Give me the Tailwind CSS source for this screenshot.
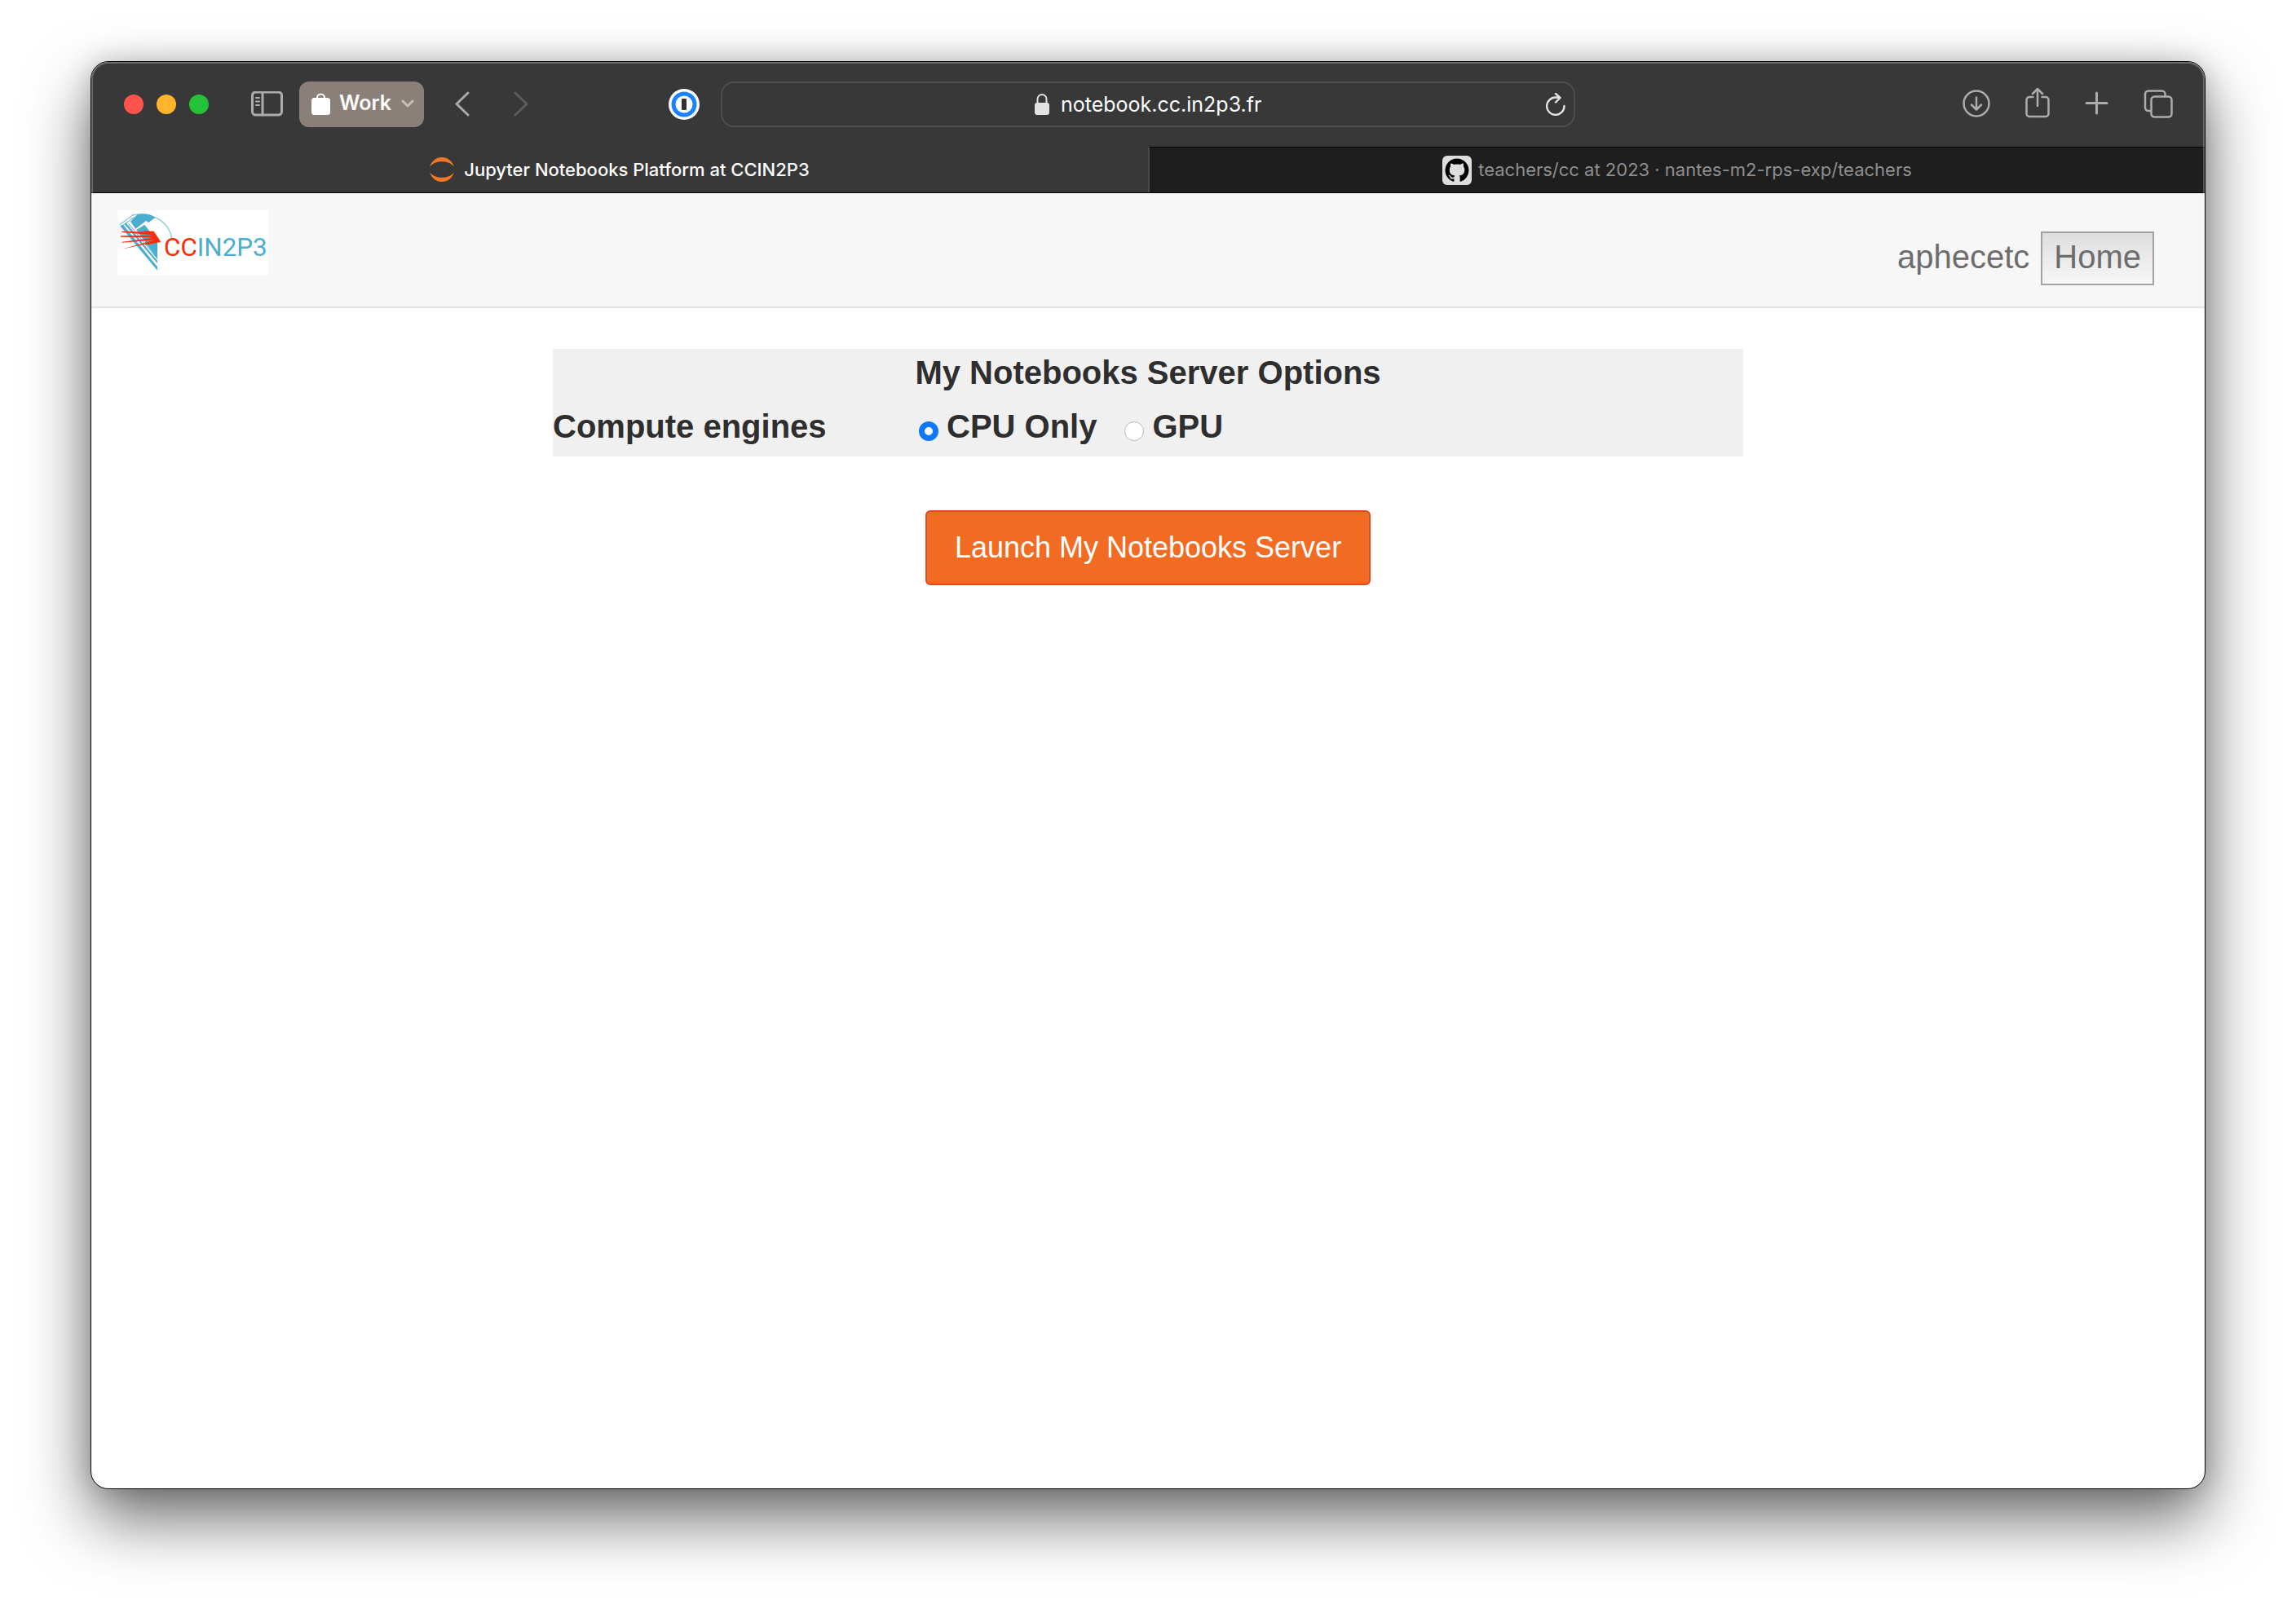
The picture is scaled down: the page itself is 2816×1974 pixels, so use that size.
<!DOCTYPE html>
<html lang="en">
<head>
<meta charset="utf-8">
<title>Jupyter Notebooks Platform at CCIN2P3</title>
<script src="https://cdn.jsdelivr.net/npm/@tailwindcss/browser@4"></script>
</head>
<body class="flex min-h-screen bg-white px-[111px] pt-[75px] pb-[147px] font-['Liberation_Sans',Arial,sans-serif]">
<div class="relative flex flex-1 flex-col overflow-hidden rounded-[22px] border border-black bg-white shadow-[0_36px_80px_rgba(0,0,0,0.58),0_0_32px_rgba(0,0,0,0.18)]">

  <!-- Browser toolbar -->
  <div class="grid h-[104px] grid-cols-[1fr_minmax(0,1048px)_1fr] items-center bg-[#383838] font-[Inter,sans-serif] text-[#acacac]">
    <div class="flex items-center pl-10">
      <div class="flex gap-4">
        <button aria-label="Close" class="size-6 rounded-full bg-[#ff544d]"></button>
        <button aria-label="Minimize" class="size-6 rounded-full bg-[#ffb429]"></button>
        <button aria-label="Zoom" class="size-6 rounded-full bg-[#25c138]"></button>
      </div>
      <button aria-label="Show sidebar" class="ml-[52px]">
        <svg class="block h-8 w-10" viewBox="0 0 40 32" fill="none" stroke="currentColor" stroke-width="3" stroke-linecap="round"><rect x="1.5" y="1" width="36" height="28" rx="4"/><path d="M14 1v28"/><path d="M6 8h4M6 12.500h4M6 17h4" stroke-width="2"/></svg>
      </button>
      <button class="ml-[19px] flex h-14 items-center rounded-xl bg-[#8a8079] pr-3 pb-0.5 pl-[15px] text-[25px] font-semibold text-white">
        <svg class="mr-2.5 h-7 w-6" viewBox="0 0 24 28"><rect x="0" y="7" width="23" height="21" rx="3.500" fill="#fff"/><path d="M7 8V7a4.500 4.500 0 0 1 9 0v1" fill="none" stroke="#fff" stroke-width="2"/></svg>
        Work
        <svg class="ml-3 h-4 w-4" viewBox="0 0 16 16" fill="none" stroke="#c6c0bb" stroke-width="3" stroke-linecap="round" stroke-linejoin="round"><path d="M2 5l6 6 6-6"/></svg>
      </button>
      <button aria-label="Back" class="ml-[38px]"><svg class="h-8 w-[18px]" viewBox="0 0 18 32" fill="none" stroke="currentColor" stroke-width="3" stroke-linecap="round" stroke-linejoin="round"><path d="M16 2L2 15.500 16 29"/></svg></button>
      <button aria-label="Forward" class="ml-[54px] text-[#5c5c5c]"><svg class="h-8 w-[18px]" viewBox="0 0 18 32" fill="none" stroke="currentColor" stroke-width="3" stroke-linecap="round" stroke-linejoin="round"><path d="M2 2l14 13.500L2 29"/></svg></button>
      <button aria-label="Passwords" class="mr-[26px] ml-auto"><svg class="size-[38px]" viewBox="0 0 38 38"><circle cx="19" cy="19" r="19" fill="#fff"/><circle cx="19" cy="19" r="13" fill="#fff" stroke="#1a82ff" stroke-width="5"/><rect x="16" y="12" width="6" height="14" rx="1" fill="#333"/></svg></button>
    </div>

    <div class="flex h-14 items-center rounded-2xl border-2 border-[#4e4e4e] text-[#e2e2e2]">
      <div class="flex-1 pl-3.5"></div>
      <svg class="mr-3.5 h-[26px] w-[18px]" viewBox="0 0 18 26"><rect y="11" width="18" height="15" rx="3" fill="currentColor"/><path d="M3.500 12V6.500a5.500 5.500 0 0 1 11 0V12" fill="none" stroke="currentColor" stroke-width="2"/></svg>
      <input type="text" aria-label="Address" value="notebook.cc.in2p3.fr" class="w-[250px] bg-transparent pt-0.5 text-[25px] text-white outline-none">
      <div class="flex flex-1 justify-end pr-2.5">
        <button aria-label="Reload"><svg class="h-7 w-6" viewBox="0 0 24 28" fill="none" stroke="currentColor" stroke-width="2.400" stroke-linecap="round" stroke-linejoin="round"><path d="M22.500 16A10.700 10.700 0 1 1 12 5.500l5.500.5M12 1l5.500 5-5.500 5.500"/></svg></button>
      </div>
    </div>

    <div class="flex items-center justify-end gap-[38px] pr-[39px]">
      <button aria-label="Downloads"><svg class="size-9" viewBox="0 0 36 36" fill="none" stroke="currentColor" stroke-width="2.500" stroke-linecap="round" stroke-linejoin="round"><circle cx="17" cy="17" r="15.500"/><path d="M17 9.500v15M11 18.500l6 6 6-6"/></svg></button>
      <button aria-label="Share"><svg class="h-10 w-9" viewBox="0 0 36 40" fill="none" stroke="currentColor" stroke-width="2.500" stroke-linecap="round" stroke-linejoin="round"><path d="M12.500 11H8a3.500 3.500 0 0 0-3.500 3.500v17A3.500 3.500 0 0 0 8 35h20a3.500 3.500 0 0 0 3.500-3.500v-17A3.500 3.500 0 0 0 28 11h-4.500M18 22V1.500M12 7l6-6 6 6"/></svg></button>
      <button aria-label="New tab"><svg class="size-9" viewBox="0 0 36 36" fill="none" stroke="currentColor" stroke-width="3" stroke-linecap="round"><path d="M16.500 4v25M4 16.500h25"/></svg></button>
      <button aria-label="Tab overview"><svg class="size-9" viewBox="0 0 36 36" fill="none" stroke="currentColor" stroke-width="2.500" stroke-linejoin="round"><rect x="9.500" y="8.500" width="25" height="25" rx="4"/><path d="M9.500 26H6a4 4 0 0 1-4-4V5.500a4 4 0 0 1 4-4h16.500a4 4 0 0 1 4 4v3"/></svg></button>
    </div>
  </div>

  <!-- Tab bar -->
  <div class="grid h-[57px] grid-cols-2 border-b border-black font-[Inter,sans-serif] text-[22px]">
    <a href="#" class="flex items-center justify-center gap-3 bg-[#383838] font-medium text-white">
      <svg class="size-[30px]" viewBox="0 0 30 30" fill="#f37726"><path d="M0 11.500C2.500 4.500 8 0 15 0s12.500 4.500 15 11.500C26 7 21 5.200 15 5.200S4 7 0 11.500zM0 18.500C2.500 25.500 8 30 15 30s12.500-4.500 15-11.500C26 23 21 24.800 15 24.800S4 23 0 18.500z"/></svg>
      Jupyter Notebooks Platform at CCIN2P3
    </a>
    <a href="#" class="flex items-center justify-center gap-2 border-t border-l-2 border-t-black border-l-[#4a4a4a] bg-[#1e1e1e] text-[#8e8e8e]">
      <svg class="size-9" viewBox="0 0 36 36"><rect width="36" height="36" rx="6" fill="#dedede"/><path transform="translate(3.500 3.500) scale(1.812)" fill="#000" d="M8 0C3.580 0 0 3.580 0 8c0 3.540 2.290 6.530 5.470 7.590.4.070.55-.17.55-.38 0-.19-.01-.82-.01-1.490-2.010.37-2.530-.49-2.690-.94-.09-.23-.48-.94-.82-1.130-.28-.15-.68-.52-.01-.53.63-.01 1.080.58 1.230.82.72 1.210 1.870.87 2.330.66.070-.52.28-.87.51-1.070-1.780-.2-3.640-.89-3.640-3.950 0-.87.31-1.590.82-2.150-.08-.2-.36-1.020.08-2.120 0 0 .67-.21 2.200.82.64-.18 1.320-.27 2-.27s1.360.09 2 .27c1.530-1.040 2.200-.82 2.200-.82.44 1.100.16 1.920.08 2.120.51.56.82 1.270.82 2.150 0 3.070-1.870 3.750-3.650 3.950.29.25.54.73.54 1.480 0 1.070-.01 1.930-.01 2.200 0 .21.15.46.55.38A8.013 8.013 0 0 0 16 8c0-4.420-3.580-8-8-8z"/></svg>
      teachers/cc at 2023 · nantes-m2-rps-exp/teachers
    </a>
  </div>

  <!-- Site header -->
  <header class="flex items-start justify-between border-b-2 border-[#e2e2e2] bg-[#f7f7f7] pt-[21px] pr-[62px] pb-[26px] pl-8">
    <a href="#" aria-label="CCIN2P3">
      <svg class="block h-20 w-[185px]" viewBox="72 54 555 240">
        <rect x="72" y="54" width="555" height="240" fill="#fff"/>
        <path d="M125 72C190 58 262 90 272 158" fill="none" stroke="#8cc9de" stroke-width="4"/>
        <g fill="#4badcf">
          <path d="M120 95L146 69Q182 62 212 80L186 100 178 92 139 122z"/>
          <path d="M142 126L172 107 219 168V234z"/>
          <path d="M82 112L92 106 219 262V275z"/>
          <path d="M98 104L104 100 219 240V250z"/>
        </g>
        <path d="M80 107L128 72M92 110L134 79M112 102L219 232" fill="none" stroke="#4badcf" stroke-width="3"/>
        <g fill="#fb2c08">
          <path d="M164 130L206 131 232 170 176 182 176 176 206 166 190 150 198 143z"/>
          <path d="M88 131L200 134 200 145 88 135zM84 148L206 146 206 154 84 152zM90 170L212 154 212 163 90 173zM88 197L206 164 206 172z"/>
        </g>
        <text x="243" y="223" font-family="Roboto, sans-serif" font-size="94" fill="#4badcf"><tspan fill="#fb2c08">CC</tspan>IN2P3</text>
      </svg>
    </a>
    <div class="flex gap-3.5 pt-[26px] text-[40px] leading-[58px] text-[#6d6d6d]">
      <span class="border-t-2 border-transparent">aphecetc</span>
      <a href="#" class="border-2 border-[#a2a2a2] bg-linear-to-b from-[#dedede] to-[#f7f7f7] px-3.5 pb-1">Home</a>
    </div>
  </header>

  <!-- Server options -->
  <main class="flex-1 px-8 pt-[50px]">
    <form class="mx-auto flex max-w-[1460px] flex-col items-center text-[#2e2e2e]">
      <div class="w-full bg-[#f0f0f0] text-[40px] leading-[58px] font-bold">
        <h1 class="pb-2 text-center">My Notebooks Server Options</h1>
        <div role="radiogroup" aria-labelledby="engines" class="flex pb-2">
          <span id="engines" class="w-[449px]">Compute engines</span>
          <label class="flex items-center gap-2.5"><input type="radio" name="engine" checked class="mt-3 size-6 appearance-none rounded-full border border-[#b8b8b8] bg-white checked:border-[7px] checked:border-[#0f78ff]">CPU Only</label>
          <label class="ml-[34px] flex items-center gap-2.5"><input type="radio" name="engine" class="mt-3 size-6 appearance-none rounded-full border border-[#b8b8b8] bg-white checked:border-[7px] checked:border-[#0f78ff]">GPU</label>
        </div>
      </div>
      <button type="button" class="mt-[66px] h-[92px] rounded-md border-2 border-[#e34a21] bg-[#f16b22] px-[34px] text-[36px] text-white">Launch My Notebooks Server</button>
    </form>
  </main>

  <!-- Light rim along the window edge -->
  <div class="pointer-events-none absolute inset-0 rounded-[21px] inset-ring-2 inset-ring-white/25"></div>
</div>
</body>
</html>
